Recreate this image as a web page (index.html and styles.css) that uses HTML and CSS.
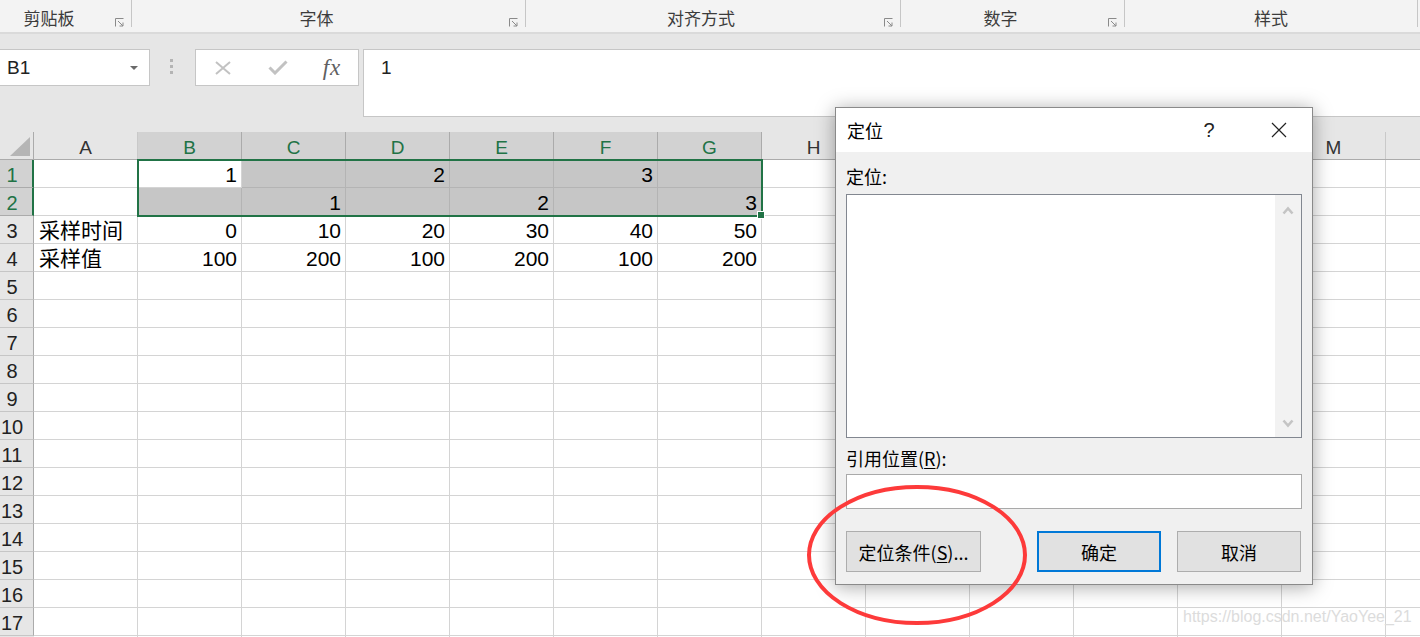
FILE: index.html
```html
<!DOCTYPE html>
<html lang="zh-CN">
<head>
  <meta charset="UTF-8">
  <title>定位</title>
  <link rel="stylesheet" href="styles.css">
</head>
<body>
  <div class="ribbon">
    <div class="group g-clip">
      <span class="glabel">剪贴板</span>
      <svg class="launcher" width="9" height="9" viewBox="0 0 9 9"><path d="M0.5 8.5V0.5H8.5M3 3L8 8M8 4.5V8H4.5" fill="none" stroke="#8a8a8a" stroke-width="1"/></svg>
    </div>
    <div class="group g-font">
      <span class="glabel">字体</span>
      <svg class="launcher" width="9" height="9" viewBox="0 0 9 9"><path d="M0.5 8.5V0.5H8.5M3 3L8 8M8 4.5V8H4.5" fill="none" stroke="#8a8a8a" stroke-width="1"/></svg>
    </div>
    <div class="group g-align">
      <span class="glabel">对齐方式</span>
      <svg class="launcher" width="9" height="9" viewBox="0 0 9 9"><path d="M0.5 8.5V0.5H8.5M3 3L8 8M8 4.5V8H4.5" fill="none" stroke="#8a8a8a" stroke-width="1"/></svg>
    </div>
    <div class="group g-num">
      <span class="glabel">数字</span>
      <svg class="launcher" width="9" height="9" viewBox="0 0 9 9"><path d="M0.5 8.5V0.5H8.5M3 3L8 8M8 4.5V8H4.5" fill="none" stroke="#8a8a8a" stroke-width="1"/></svg>
    </div>
    <div class="group g-style">
      <span class="glabel">样式</span>
    </div>
  </div>

  <div class="formula-bar">
    <div class="name-box">
      <span>B1</span>
      <i class="caret"></i>
    </div>
    <div class="grip"><i></i><i></i><i></i></div>
    <div class="fx-box">
      <span class="fx-btn b-cancel">
        <svg width="18" height="14" viewBox="0 0 18 14"><path d="M2 1L16 13M16 1L2 13" stroke="#c2c2c2" stroke-width="2" fill="none"/></svg>
      </span>
      <span class="fx-btn b-enter">
        <svg width="20" height="15" viewBox="0 0 20 15"><path d="M1.5 7.5L7 13L18.5 1.5" stroke="#c2c2c2" stroke-width="3" fill="none"/></svg>
      </span>
      <span class="fx-btn b-fx"><i>fx</i></span>
    </div>
    <div class="formula-input">1</div>
  </div>

  <div class="sheet">
    <div class="corner"></div>
    <div class="col-heads">
      <div class="ch">A</div>
      <div class="ch on">B</div>
      <div class="ch on">C</div>
      <div class="ch on">D</div>
      <div class="ch on">E</div>
      <div class="ch on">F</div>
      <div class="ch on">G</div>
      <div class="ch">H</div>
      <div class="ch">I</div>
      <div class="ch">J</div>
      <div class="ch">K</div>
      <div class="ch">L</div>
      <div class="ch">M</div>
      <div class="ch last"></div>
    </div>
    <div class="row-heads">
      <div class="rh on">1</div>
      <div class="rh on">2</div>
      <div class="rh">3</div>
      <div class="rh">4</div>
      <div class="rh">5</div>
      <div class="rh">6</div>
      <div class="rh">7</div>
      <div class="rh">8</div>
      <div class="rh">9</div>
      <div class="rh">10</div>
      <div class="rh">11</div>
      <div class="rh">12</div>
      <div class="rh">13</div>
      <div class="rh">14</div>
      <div class="rh">15</div>
      <div class="rh">16</div>
      <div class="rh">17</div>
    </div>
    <div class="cells">
      <div class="data">
        <div class="c"></div>
        <div class="c">1</div>
        <div class="c sel"></div>
        <div class="c sel">2</div>
        <div class="c sel"></div>
        <div class="c sel">3</div>
        <div class="c sel"></div>

        <div class="c"></div>
        <div class="c sel"></div>
        <div class="c sel">1</div>
        <div class="c sel"></div>
        <div class="c sel">2</div>
        <div class="c sel"></div>
        <div class="c sel">3</div>

        <div class="c txt">采样时间</div>
        <div class="c">0</div>
        <div class="c">10</div>
        <div class="c">20</div>
        <div class="c">30</div>
        <div class="c">40</div>
        <div class="c">50</div>

        <div class="c txt">采样值</div>
        <div class="c">100</div>
        <div class="c">200</div>
        <div class="c">100</div>
        <div class="c">200</div>
        <div class="c">100</div>
        <div class="c">200</div>
      </div>
      <div class="selection"><i class="fill-handle"></i></div>
    </div>
  </div>

  <div class="dialog">
    <div class="dlg-title">
      <span class="dlg-name">定位</span>
      <span class="dlg-help">?</span>
      <span class="dlg-close">
        <svg width="16" height="16" viewBox="0 0 16 16"><path d="M1 1L15 15M15 1L1 15" stroke="#222" stroke-width="1.2" fill="none"/></svg>
      </span>
    </div>
    <div class="dlg-body">
      <div class="dlg-label">定位:</div>
      <div class="listbox">
        <div class="scroll">
          <svg width="12" height="9" viewBox="0 0 12 9"><path d="M1.5 7.5L6 2.5L10.5 7.5" stroke="#c4c4c4" stroke-width="2.6" fill="none"/></svg>
          <svg width="12" height="9" viewBox="0 0 12 9"><path d="M1.5 1.5L6 6.5L10.5 1.5" stroke="#c4c4c4" stroke-width="2.6" fill="none"/></svg>
        </div>
      </div>
      <div class="dlg-label ref">引用位置(<u>R</u>):</div>
      <div class="ref-input"></div>
      <div class="dlg-buttons">
        <button class="btn btn-special">定位条件(<u>S</u>)...</button>
        <button class="btn btn-ok">确定</button>
        <button class="btn">取消</button>
      </div>
    </div>
  </div>

  <svg class="circle-mark" width="236" height="156" viewBox="0 0 236 156">
    <ellipse cx="117" cy="75" rx="108" ry="68" fill="none" stroke="#fd3a3a" stroke-width="4"/>
  </svg>

  <div class="watermark">https://blog.csdn.net/YaoYee_21</div>
</body>
</html>
```

FILE: styles.css
```css
body {
  margin: 0;
  width: 1420px;
  height: 637px;
  overflow: hidden;
  position: relative;
  background-color: #e6e6e6;
  font-family: "Liberation Sans", "Noto Sans CJK SC", sans-serif;
}

/* ribbon group labels */
.ribbon {
  display: flex;
  height: 32px;
  background-color: #f3f3f3;
  border-bottom: 2px solid #dadada;
  white-space: nowrap;
}
.group {
  display: flex;
  align-items: flex-start;
  height: 27px;
  box-sizing: border-box;
  border-right: 1px solid #c6c6c6;
}
.g-clip { width: 141px; margin-left: -9px; }
.g-font { width: 394px; }
.g-align { width: 375px; }
.g-num { width: 224px; }
.g-style { width: 293px; }
.glabel {
  flex: 1;
  text-align: center;
  font-family: "Noto Sans CJK SC", sans-serif;
  font-size: 17px;
  line-height: 24px;
  padding-top: 6px;
  color: #3c3c3c;
}
.launcher {
  flex: none;
  margin: 18px 7px 0 8px;
}

/* name box + formula bar */
.formula-bar {
  display: flex;
  align-items: flex-start;
  height: 98px;
  box-sizing: border-box;
  padding-top: 15px;
}
.name-box {
  display: flex;
  align-items: center;
  width: 151px;
  height: 37px;
  margin-left: -1px;
  box-sizing: border-box;
  border: 1px solid #c6c6c6;
  background-color: #fff;
  padding-left: 7px;
  font-size: 19px;
  color: #222;
}
.caret {
  margin-left: auto;
  margin-right: 11px;
  width: 0;
  height: 0;
  border-left: 4px solid transparent;
  border-right: 4px solid transparent;
  border-top: 4px solid #6a6a6a;
}
.grip {
  display: flex;
  flex-direction: column;
  gap: 3px;
  width: 45px;
  padding: 10px 0 0 20px;
  box-sizing: border-box;
}
.grip i {
  display: block;
  width: 3px;
  height: 3px;
  background-color: #b4b4b4;
}
.fx-box {
  display: flex;
  align-items: center;
  width: 164px;
  height: 37px;
  box-sizing: border-box;
  border: 1px solid #c6c6c6;
  background-color: #fff;
}
.fx-btn {
  display: flex;
  justify-content: center;
  align-items: center;
}
.b-cancel { width: 53px; }
.b-enter { width: 58px; }
.b-fx { width: 50px; }
.b-fx i {
  font-family: "Liberation Serif", serif;
  font-size: 23px;
  color: #606060;
  letter-spacing: 1px;
}
.formula-input {
  flex: 1;
  margin-left: 4px;
  height: 68px;
  box-sizing: border-box;
  border: 1px solid #c6c6c6;
  border-right: none;
  background-color: #fff;
  padding: 7px 0 0 17px;
  font-size: 19px;
  line-height: 22px;
  color: #222;
}

/* worksheet */
.sheet {
  display: grid;
  grid-template-columns: 34px 1fr;
  grid-template-rows: 28px 1fr;
  height: 505px;
  background-color: #fff;
}
.corner {
  position: relative;
  background-color: #e6e6e6;
  border-right: 1px solid #ababab;
  border-bottom: 1px solid #ababab;
}
.corner::after {
  content: "";
  position: absolute;
  right: 3px;
  bottom: 3px;
  border-left: 20px solid transparent;
  border-bottom: 19px solid #b5b5b5;
}
.col-heads {
  display: flex;
  background-color: #e6e6e6;
  border-bottom: 1px solid #ababab;
}
.ch {
  width: 104px;
  flex: none;
  box-sizing: border-box;
  border-right: 1px solid #c9c9c9;
  text-align: center;
  font-size: 19px;
  line-height: 23px;
  padding-top: 4px;
  color: #333;
}
.ch.on {
  background-color: #d2d2d2;
  border-right-color: #ababab;
  color: #217346;
}
.ch.last {
  flex: 1;
  border-right: none;
}
.row-heads {
  display: flex;
  flex-direction: column;
  background-color: #e6e6e6;
}
.rh {
  height: 28px;
  flex: none;
  box-sizing: border-box;
  border-bottom: 1px solid #c6c6c6;
  border-right: 1px solid #ababab;
  padding: 3px 9px 0 0;
  text-align: center;
  font-size: 20px;
  line-height: 24px;
  color: #222;
}
.rh.on {
  background-color: #d2d2d2;
  color: #217346;
  border-right: 2px solid #217346;
  padding-right: 8px;
  border-bottom-color: #ababab;
}
.cells {
  position: relative;
  background-image:
    repeating-linear-gradient(to right, transparent 0 103px, #d4d4d4 103px 104px),
    repeating-linear-gradient(to bottom, transparent 0 27px, #d4d4d4 27px 28px);
}
.data {
  display: grid;
  grid-template-columns: repeat(7, 104px);
  grid-template-rows: repeat(4, 28px);
}
.c {
  box-sizing: border-box;
  border-right: 1px solid #d4d4d4;
  border-bottom: 1px solid #d4d4d4;
  background-color: #fff;
  padding: 3px 4px 0;
  font-size: 21px;
  line-height: 24px;
  text-align: right;
  white-space: nowrap;
  color: #000;
}
.c.sel {
  background-color: #c6c6c6;
  border-color: #b4b4b4;
}
.c.txt {
  text-align: left;
  padding-left: 5px;
}
.selection {
  position: absolute;
  left: 103px;
  top: -1px;
  width: 626px;
  height: 58px;
  box-sizing: border-box;
  border: 2px solid #217346;
}
.fill-handle {
  position: absolute;
  right: -4px;
  bottom: -4px;
  width: 6px;
  height: 6px;
  background-color: #217346;
  border: 1px solid #fff;
}

/* 定位 dialog */
.dialog {
  position: absolute;
  left: 835px;
  top: 107px;
  width: 478px;
  height: 478px;
  box-sizing: border-box;
  border: 1px solid #8a8a8a;
  background-color: #f0f0f0;
  box-shadow: 0 2px 18px rgba(0, 0, 0, 0.35);
  font-family: "Noto Sans CJK SC", sans-serif;
  color: #000;
}
.dlg-title {
  display: flex;
  align-items: center;
  height: 44px;
  background-color: #fff;
  padding: 0 10px 0 11px;
}
.dlg-name {
  font-size: 18px;
}
.dlg-help {
  margin-left: auto;
  width: 46px;
  margin-right: 24px;
  text-align: center;
  font-family: "Liberation Sans", sans-serif;
  font-size: 20px;
  color: #222;
}
.dlg-close {
  display: flex;
  justify-content: center;
  width: 46px;
}
.dlg-body {
  padding: 12px 10px 0;
}
.dlg-label {
  font-size: 18px;
  line-height: 24px;
  margin-bottom: 6px;
}
.dlg-label.ref {
  margin: 8px 0 4px;
}
.dlg-label u, .btn u {
  text-underline-offset: 2px;
}
.listbox {
  display: flex;
  justify-content: flex-end;
  height: 244px;
  box-sizing: border-box;
  border: 1px solid #828790;
  background-color: #fff;
}
.scroll {
  display: flex;
  flex-direction: column;
  justify-content: space-between;
  align-items: center;
  width: 26px;
  padding: 11px 0 9px;
  box-sizing: border-box;
  background-color: #f2f2f2;
}
.ref-input {
  height: 35px;
  box-sizing: border-box;
  border: 1px solid #a9a9a9;
  background-color: #fff;
}
.dlg-buttons {
  display: flex;
  gap: 16px;
  margin-top: 22px;
}
.btn {
  height: 41px;
  width: 124px;
  box-sizing: border-box;
  border: 1px solid #adadad;
  background-color: #e1e1e1;
  font-family: "Noto Sans CJK SC", sans-serif;
  font-size: 18px;
  color: #000;
  padding: 0;
}
.btn-special {
  width: 135px;
  margin-right: 40px;
}
.btn-ok {
  border: 2px solid #0078d7;
}

.circle-mark {
  position: absolute;
  left: 800px;
  top: 480px;
}
.watermark {
  position: absolute;
  left: 1183px;
  top: 608px;
  font-size: 16px;
  color: #dcdcdc;
}
```
